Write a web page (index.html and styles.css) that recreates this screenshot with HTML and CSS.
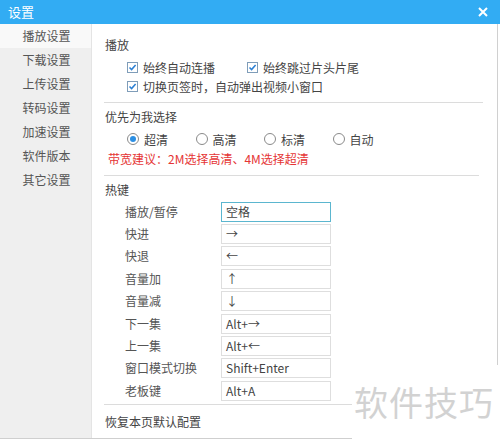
FILE: index.html
```html
<!DOCTYPE html>
<html lang="zh">
<head>
<meta charset="utf-8">
<title>设置</title>
<link rel="stylesheet" href="styles.css">
</head>
<body>
<div class="window">
  <div class="titlebar">
    <span class="title">设置</span>
    <svg class="close" width="10" height="10" viewBox="0 0 10 10"><path d="M1 1L9 9M9 1L1 9" stroke="#fff" stroke-width="2" fill="none"/></svg>
  </div>
  <div class="main">
    <ul class="sidebar">
      <li class="active">播放设置</li>
      <li>下载设置</li>
      <li>上传设置</li>
      <li>转码设置</li>
      <li>加速设置</li>
      <li>软件版本</li>
      <li>其它设置</li>
    </ul>
    <div class="content">
      <div class="sec-title first">播放</div>
      <div class="check-row">
        <label class="check wide"><svg class="cb" width="11" height="11" viewBox="0 0 11 11"><rect x="0.5" y="0.5" width="10" height="10" fill="#fff" stroke="#7f9db9"/><path d="M2.5 5.5L4.6 7.6L8.6 3" stroke="#2a7fd4" stroke-width="1.5" fill="none"/></svg><span>始终自动连播</span></label>
        <label class="check"><svg class="cb" width="11" height="11" viewBox="0 0 11 11"><rect x="0.5" y="0.5" width="10" height="10" fill="#fff" stroke="#7f9db9"/><path d="M2.5 5.5L4.6 7.6L8.6 3" stroke="#2a7fd4" stroke-width="1.5" fill="none"/></svg><span>始终跳过片头片尾</span></label>
      </div>
      <div class="check-row">
        <label class="check"><svg class="cb" width="11" height="11" viewBox="0 0 11 11"><rect x="0.5" y="0.5" width="10" height="10" fill="#fff" stroke="#7f9db9"/><path d="M2.5 5.5L4.6 7.6L8.6 3" stroke="#2a7fd4" stroke-width="1.5" fill="none"/></svg><span>切换页签时，自动弹出视频小窗口</span></label>
      </div>
      <div class="divider d1"></div>

      <div class="sec-title">优先为我选择</div>
      <div class="radio-row">
        <label class="radio"><span class="circle on"></span><span>超清</span></label>
        <label class="radio"><span class="circle"></span><span>高清</span></label>
        <label class="radio"><span class="circle"></span><span>标清</span></label>
        <label class="radio"><span class="circle"></span><span>自动</span></label>
      </div>
      <div class="hint">带宽建议：2M选择高清、4M选择超清</div>
      <div class="divider d2"></div>

      <div class="sec-title">热键</div>
      <div class="hotkeys">
        <span class="hk-label">播放/暂停</span><span class="hk-input focus">空格</span>
        <span class="hk-label">快进</span><span class="hk-input">→</span>
        <span class="hk-label">快退</span><span class="hk-input">←</span>
        <span class="hk-label">音量加</span><span class="hk-input">↑</span>
        <span class="hk-label">音量减</span><span class="hk-input">↓</span>
        <span class="hk-label">下一集</span><span class="hk-input">Alt+→</span>
        <span class="hk-label">上一集</span><span class="hk-input">Alt+←</span>
        <span class="hk-label">窗口模式切换</span><span class="hk-input">Shift+Enter</span>
        <span class="hk-label">老板键</span><span class="hk-input">Alt+A</span>
      </div>
      <div class="divider d3"></div>
      <div class="restore">恢复本页默认配置</div>
    </div>
  </div>
  <div class="watermark">软件技巧</div>
</div>
</body>
</html>
```
FILE: styles.css
```css
* { box-sizing: border-box; }
html, body { margin: 0; padding: 0; background: #fff; }
body {
  font-family: "Noto Sans CJK SC", "Noto Sans", sans-serif;
  font-size: 12px;
  color: #444;
  width: 500px;
  height: 440px;
  overflow: hidden;
}
.window {
  position: relative;
  width: 500px;
  height: 439px;
  display: flex;
  flex-direction: column;
  border-bottom: 1px solid #cfcfcf;
}
.titlebar {
  height: 24px;
  flex: none;
  background: #32acf3;
  display: flex;
  align-items: center;
  justify-content: space-between;
  padding: 0 12px 0 8px;
}
.title { color: #fff; font-size: 13px; line-height: 24px; }
.close { display: block; }
.main {
  flex: 1;
  display: flex;
  min-height: 0;
}
.sidebar {
  list-style: none;
  margin: 0;
  padding: 0;
  width: 92px;
  flex: none;
  background: #efefef;
  border-right: 1px solid #e4e4e4;
}
.sidebar li {
  height: 24px;
  line-height: 24px;
  text-align: center;
  color: #555;
  padding-left: 2px;
}
.sidebar li.active { background: #f9f9f9; }
.content {
  flex: 1;
  padding-left: 12px;
  border-right: 1px solid #d0d0d0;
  margin-right: 2px;
}
.sec-title { line-height: 18px; height: 18px; color: #444; padding-left: 1px; }
.sec-title.first { margin-top: 12px; }
.check-row {
  display: flex;
  align-items: center;
  height: 19px;
  padding-left: 23px;
}
.sec-title.first + .check-row { margin-top: 4px; }
.check { display: flex; align-items: center; gap: 5px; line-height: 19px; }
.check.wide { width: 120px; }
.cb { display: block; flex: none; }
.divider { height: 1px; background: #dcdcdc; }
.d1 { margin: 6px 14px 5px 0; }
.d2 { margin: 7px 18px 5px 0; }
.d3 { margin: 3px 14px 8px 0; }
.radio-row {
  display: flex;
  height: 20px;
  align-items: center;
  margin-top: 3px;
  padding-left: 23px;
}
.radio { display: flex; align-items: center; gap: 5px; width: 68.5px; }
.circle {
  width: 12px;
  height: 12px;
  border: 1px solid #8a8a8a;
  border-radius: 50%;
  display: flex;
  align-items: center;
  justify-content: center;
  background: #fff;
  flex: none;
}
.circle.on::after {
  content: "";
  width: 6px;
  height: 6px;
  border-radius: 50%;
  background: #2c8fe3;
}
.hint {
  color: #e53535;
  line-height: 18px;
  margin-top: 1px;
  padding-left: 4px;
}
.hotkeys {
  display: grid;
  grid-template-columns: 96px 110px;
  row-gap: 2.4px;
  margin-top: 2.7px;
  padding-left: 21px;
}
.hk-label { line-height: 20px; height: 20px; color: #555; }
.hk-input {
  height: 20px;
  line-height: 18px;
  border: 1px solid #dedede;
  padding-left: 4px;
  color: #444;
  background: #fff;
}
.hk-input.focus { border-color: #5bb6cf; }
.restore { line-height: 18px; padding-left: 1px; }
.watermark {
  position: absolute;
  left: 352px;
  top: 365px;
  width: 148px;
  height: 76px;
  background: #fff;
  color: #d2d2d2;
  font-size: 34px;
  line-height: 34px;
  padding-top: 20px;
  padding-left: 2px;
  letter-spacing: 1px;
  white-space: nowrap;
}
```
